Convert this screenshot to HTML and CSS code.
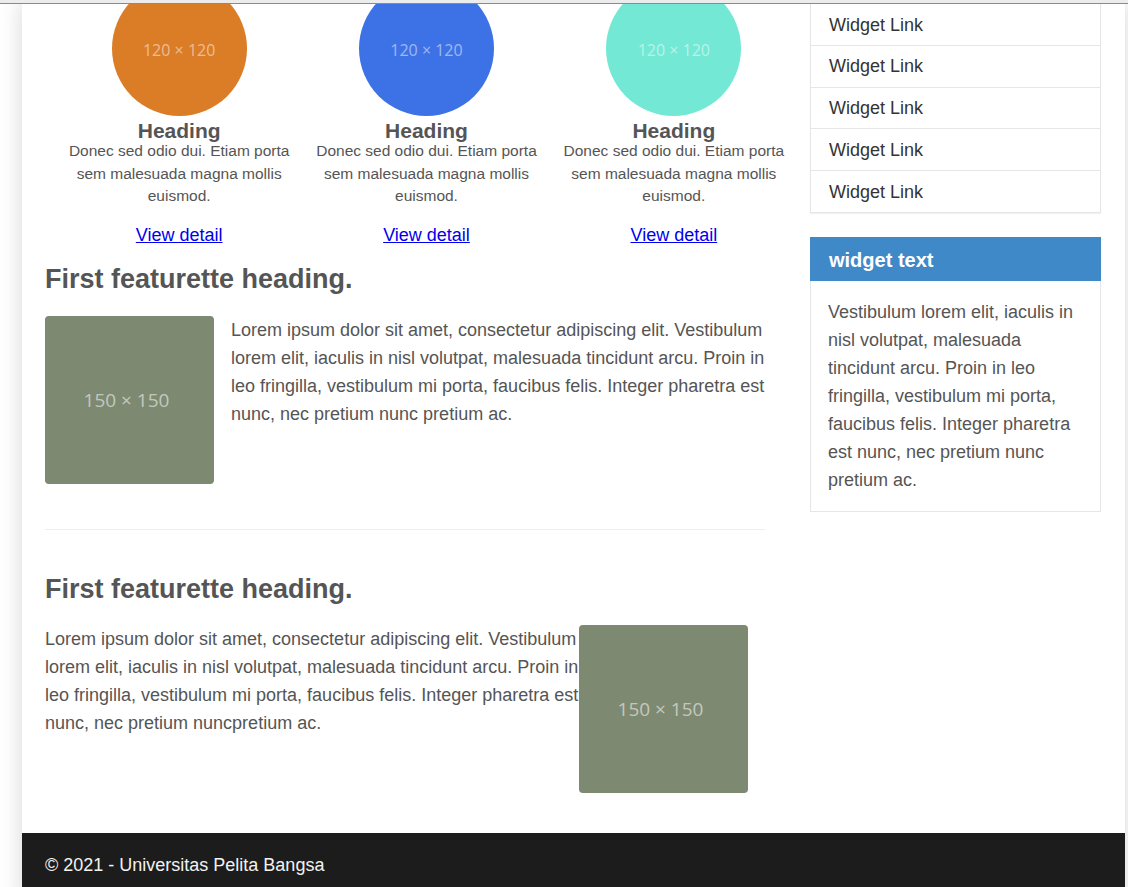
FILE: index.html
```html
<!DOCTYPE html>
<html lang="en">
<head>
<meta charset="utf-8">
<title>Universitas Pelita Bangsa</title>
<link rel="stylesheet" href="styles.css">
</head>
<body>
<div class="frame-top"></div>
<div class="page">
  <div class="content">
    <main class="main">
      <div class="thumbs">
        <div class="thumb">
          <div class="circle orange">120 × 120</div>
          <h2 class="thumb-title">Heading</h2>
          <p class="thumb-text">Donec sed odio dui. Etiam porta sem malesuada magna mollis euismod.</p>
          <a class="thumb-link" href="#">View detail</a>
        </div>
        <div class="thumb">
          <div class="circle blue">120 × 120</div>
          <h2 class="thumb-title">Heading</h2>
          <p class="thumb-text">Donec sed odio dui. Etiam porta sem malesuada magna mollis euismod.</p>
          <a class="thumb-link" href="#">View detail</a>
        </div>
        <div class="thumb">
          <div class="circle teal">120 × 120</div>
          <h2 class="thumb-title">Heading</h2>
          <p class="thumb-text">Donec sed odio dui. Etiam porta sem malesuada magna mollis euismod.</p>
          <a class="thumb-link" href="#">View detail</a>
        </div>
      </div>

      <section class="featurette">
        <h2 class="feat-title">First featurette heading.</h2>
        <div class="feat-body">
          <div class="placeholder">150 × 150</div>
          <p class="feat-text">Lorem ipsum dolor sit amet, consectetur adipiscing elit. Vestibulum lorem elit, iaculis in nisl volutpat, malesuada tincidunt arcu. Proin in leo fringilla, vestibulum mi porta, faucibus felis. Integer pharetra est nunc, nec pretium nunc pretium ac.</p>
        </div>
      </section>

      <hr class="divider">

      <section class="featurette second">
        <h2 class="feat-title">First featurette heading.</h2>
        <div class="feat-body">
          <p class="feat-text">Lorem ipsum dolor sit amet, consectetur adipiscing elit. Vestibulum lorem elit, iaculis in nisl volutpat, malesuada tincidunt arcu. Proin in leo fringilla, vestibulum mi porta, faucibus felis. Integer pharetra est nunc, nec pretium nuncpretium ac.</p>
          <div class="placeholder">150 × 150</div>
        </div>
      </section>
    </main>

    <aside class="sidebar">
      <ul class="widget-list">
        <li><a href="#">Widget Link</a></li>
        <li><a href="#">Widget Link</a></li>
        <li><a href="#">Widget Link</a></li>
        <li><a href="#">Widget Link</a></li>
        <li><a href="#">Widget Link</a></li>
      </ul>
      <div class="widget-panel">
        <h3 class="widget-head">widget text</h3>
        <p class="widget-body">Vestibulum lorem elit, iaculis in nisl volutpat, malesuada tincidunt arcu. Proin in leo fringilla, vestibulum mi porta, faucibus felis. Integer pharetra est nunc, nec pretium nunc pretium ac.</p>
      </div>
    </aside>
  </div>

  <footer class="footer">© 2021 - Universitas Pelita Bangsa</footer>
</div>
</body>
</html>
```

FILE: styles.css
```css
* { box-sizing: border-box; }

html, body {
  margin: 0;
  padding: 0;
}

body {
  background: #ffffff;
  font-family: "Liberation Sans", Arial, sans-serif;
  color: #555;
  overflow: hidden;
  height: 887px;
}

.frame-top {
  position: fixed;
  top: 0;
  left: 0;
  right: 0;
  height: 4px;
  background: #ececec;
  border-bottom: 1px solid #8a8a8a;
  z-index: 10;
}

.page {
  margin: 0 3px 0 22px;
  background: #fff;
  box-shadow: 0 0 22px rgba(0, 0, 0, 0.16);
}

.content {
  display: flex;
  align-items: flex-start;
  padding: 0 24px 0 23px;
  gap: 45px;
}

.main {
  width: 720px;
  flex: none;
}

/* thumbnails */
.thumbs {
  display: grid;
  grid-template-columns: repeat(3, 1fr);
  width: 742px;
  margin-left: 10.5px;
  margin-top: -19px;
}

.thumb {
  padding: 0 6px;
  text-align: center;
}

.circle {
  width: 135px;
  height: 135px;
  border-radius: 50%;
  margin: 0 auto;
  padding-top: 2px;
  display: flex;
  align-items: center;
  justify-content: center;
  font-family: "Open Sans", sans-serif;
  font-size: 16px;
  color: rgba(255, 255, 255, 0.5);
}

.orange { background: #db7c26; }
.blue { background: #3d71e6; }
.teal { background: #72e8d5; }

.thumb-title {
  margin: 5px 0 0;
  font-size: 21px;
  line-height: 19px;
  font-weight: bold;
  color: #555;
}

.thumb-text {
  margin: 0;
  font-size: 15.5px;
  line-height: 22.5px;
  color: #555;
}

.thumb-link {
  display: inline-block;
  margin-top: 15.5px;
  font-size: 18px;
  line-height: 24px;
  color: #0000ee;
  text-decoration: underline;
}

/* featurettes */
.featurette {
  padding-top: 16px;
}

.feat-title {
  margin: 0;
  font-size: 27px;
  line-height: 32px;
  font-weight: bold;
  color: #555;
}

.feat-body {
  display: flex;
  align-items: flex-start;
  gap: 17px;
  margin-top: 21px;
}

.feat-text {
  margin: 0;
  width: 534px;
  font-size: 18px;
  line-height: 28px;
  color: #555;
}

.placeholder {
  flex: none;
  width: 169px;
  height: 168px;
  border-radius: 4px;
  background: #7e8971;
  display: flex;
  align-items: center;
  justify-content: center;
  padding-right: 6px;
  font-family: "Open Sans", sans-serif;
  font-size: 19px;
  color: rgba(255, 255, 255, 0.55);
}

.divider {
  border: 0;
  border-top: 1px solid #eee;
  margin: 45px 0 0;
  height: 0;
}

.featurette.second {
  padding-top: 43px;
}

.featurette.second .feat-body {
  gap: 0;
  margin-top: 20px;
}

/* sidebar */
.sidebar {
  width: 291px;
  flex: none;
  padding-top: 3px;
}

.widget-list {
  list-style: none;
  margin: 0;
  padding: 0;
  box-shadow: 0 1px 1px rgba(0, 0, 0, 0.05);
}

.widget-list li {
  border: 1px solid #e6e6e6;
  margin-bottom: -1px;
  padding: 10.5px 18px 9.5px;
  line-height: 20.75px;
  font-size: 18px;
}

.widget-list li:last-child {
  margin-bottom: 0;
}

.widget-list a {
  color: #333;
  text-decoration: none;
}

.widget-panel {
  margin-top: 24px;
  border: 1px solid #e6e6e6;
  border-top: 0;
}

.widget-head {
  margin: 0 -1px;
  height: 44px;
  background: #3f89c9;
  color: #fff;
  font-size: 20px;
  font-weight: bold;
  line-height: 44px;
  padding: 1px 18px 0 19px;
}

.widget-body {
  margin: 0;
  padding: 17px 17px 17px;
  font-size: 18px;
  line-height: 28px;
  color: #555;
}

/* footer */
.footer {
  margin-top: 40px;
  background: #1c1c1c;
  color: #f2f2f2;
  font-size: 18px;
  line-height: 20px;
  padding: 22px 23px 30px;
}
```
